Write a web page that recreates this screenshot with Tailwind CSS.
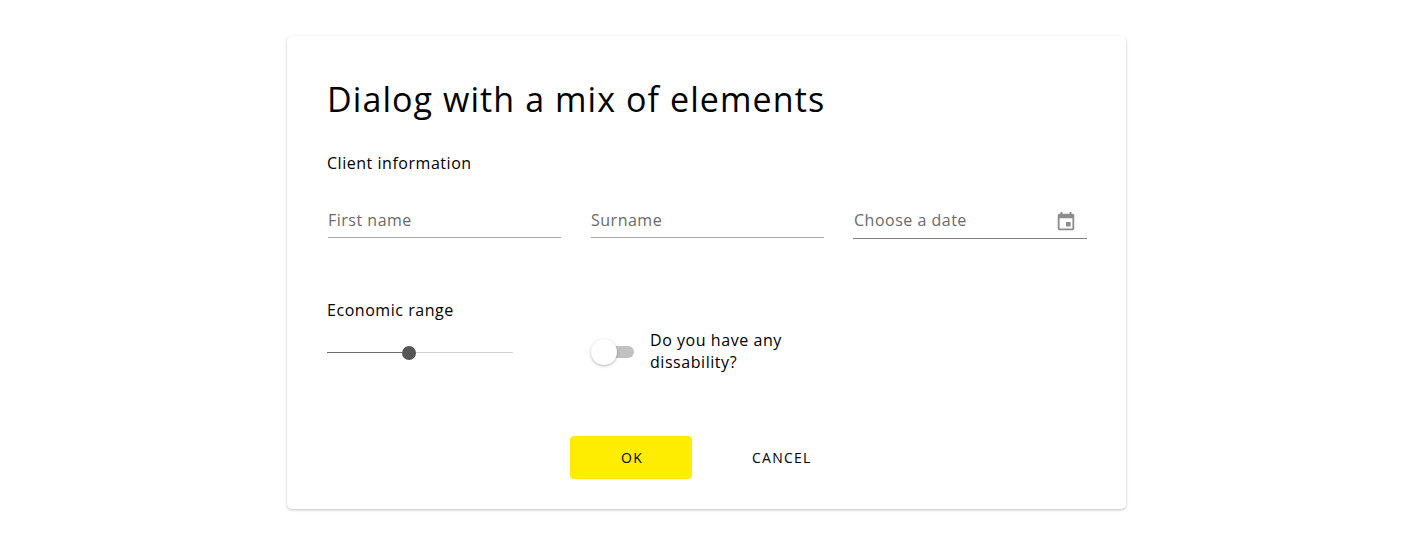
<!DOCTYPE html>
<html lang="en"><head><meta charset="utf-8"><title>Dialog</title>
<script src="https://cdn.jsdelivr.net/npm/@tailwindcss/browser@4"></script></head>
<body class="min-h-screen bg-white pt-9 font-['Open_Sans',sans-serif] text-black">
<main class="ml-[287px] h-[473px] w-[839px] rounded-[5px] bg-white px-10 pt-[39px] shadow-[0_1px_3px_rgba(0,0,0,0.25)]">
<h1 class="h-12 whitespace-nowrap text-[34px] leading-[48px] tracking-[1.08px]">Dialog with a mix of elements</h1>
<p class="mt-[29px] h-[22px] text-base leading-[22px] tracking-[0.53px]">Client information</p>
<div class="mt-[35px] grid grid-cols-[233px_233px_233px] gap-[30px] pl-px text-base leading-[22px] tracking-[0.5px] text-[#6a6a6a]">
<div class="h-[29px] border-b border-[#a8a8a8]">First name</div>
<div class="h-[29px] border-b border-[#a8a8a8]">Surname</div>
<div class="-ml-px flex h-[30px] justify-between border-b border-[#808080] pr-[10px] pl-px"><span>Choose a date</span>
<svg class="mt-[2px] size-[22px]" viewBox="0 0 24 24" fill="#8c8c8c"><path d="M17 12h-5v5h5v-5zM16 1v2H8V1H6v2H5c-1.11 0-1.99.9-1.99 2L3 19c0 1.1.89 2 2 2h14c1.1 0 2-.9 2-2V5c0-1.1-.9-2-2-2h-1V1h-2zm3 18H5V8h14v11z"/></svg></div>
</div>
<div class="mt-[60px] flex h-[75px]">
<section class="w-[264px]"><p class="text-base leading-[22px] tracking-[0.54px]">Economic range</p>
<div class="mt-6 flex h-[15px] w-[186px] items-center"><span class="h-px w-[74.5px] bg-[#6c6c6c]"></span><span class="size-[14px] rounded-full bg-[#565656]"></span><span class="h-px flex-1 bg-[#d2d2d2]"></span></div></section>
<section class="flex pt-[30px]"><div class="mt-[10px] flex h-[26px] w-[43px] items-center"><span class="z-10 size-[26px] rounded-full bg-white shadow-[0_1px_3px_rgba(0,0,0,0.3)]"></span><span class="-ml-3 h-3 w-[29px] rounded-full bg-[#c1c1c1]"></span></div><p class="ml-4 text-base leading-[22px] tracking-[0.55px]">Do you have any<br>dissability?</p></section>
</div>
<div class="ml-[243px] mt-[62px] flex text-sm leading-[43px] tracking-[1.25px]"><button class="h-[43px] w-[122px] rounded bg-[#ffed00] pl-0.5">OK</button><button class="ml-[60px]">CANCEL</button></div>
</main></body></html>
